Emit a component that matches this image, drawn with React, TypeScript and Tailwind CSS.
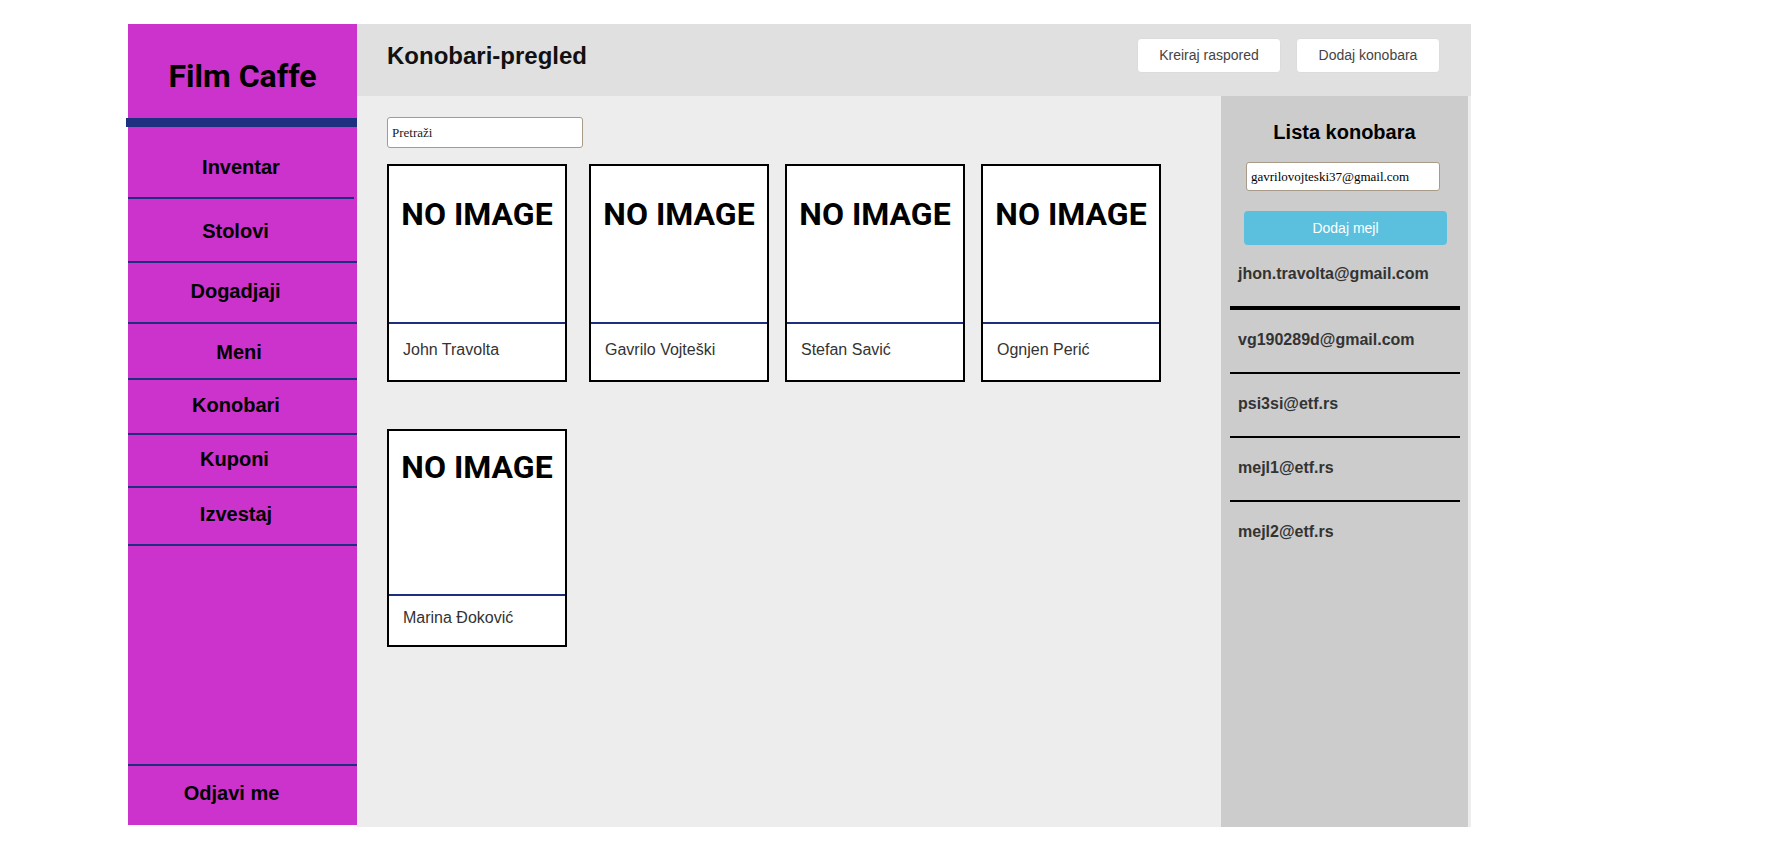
import React from 'react';

const navItems = [
  { label: 'Inventar', cls: 'h-[72px] pt-[28px] mr-[3px]' },
  { label: 'Stolovi', cls: 'h-[64px] pt-[20px] pr-[14px]' },
  { label: 'Dogadjaji', cls: 'h-[61px] pt-[16px] pr-[14px]' },
  { label: 'Meni', cls: 'h-[56px] pt-[16px] pr-[7px]' },
  { label: 'Konobari', cls: 'h-[55px] pt-[13px] pr-[13px]' },
  { label: 'Kuponi', cls: 'h-[53px] pt-[12px] pr-[16px]' },
  { label: 'Izvestaj', cls: 'h-[58px] pt-[14px] pr-[13px]' },
];

const waiters = ['John Travolta', 'Gavrilo Vojteški', 'Stefan Savić', 'Ognjen Perić', 'Marina Đoković'];

const mails = ['jhon.travolta@gmail.com', 'vg190289d@gmail.com', 'psi3si@etf.rs', 'mejl1@etf.rs', 'mejl2@etf.rs'];

const Sidebar: React.FC = () => (
  <aside className="w-[229px] h-[801px] shrink-0 bg-[#cc33cc] flex flex-col font-['Liberation_Sans',Arial,sans-serif] text-[20px] font-bold text-black">
    <div className="h-[94px] pt-[33px] text-center font-['Roboto',sans-serif] text-[32px] leading-[38px]">Film Caffe</div>
    <div className="h-[9px] w-[232px] -ml-[2px] bg-[#1e3180]" />
    {navItems.map((item) => (
      <div key={item.label} className={`${item.cls} border-b-2 border-[#1f2f7f] text-center leading-[24px]`}>
        {item.label}
      </div>
    ))}
    <div className="flex-1" />
    <div className="h-[61px] border-t-2 border-[#1f2f7f] pt-[15px] pr-[22px] text-center leading-[24px]">Odjavi me</div>
  </aside>
);

// second row card in the original is laid out a bit differently (taller photo area)
const WaiterCard: React.FC<{ name: string; first?: boolean; tall?: boolean }> = ({ name, first, tall }) => (
  <div className={`w-[180px] h-[218px] border-2 border-black bg-white flex flex-col ${first ? 'mr-[6px]' : ''}`}>
    <div
      className={`${tall ? 'h-[163px] pt-[20px]' : 'h-[156px] pt-[32px]'} text-center font-['Roboto',sans-serif] font-bold text-[32px] leading-[32px] text-black`}
    >
      NO IMAGE
    </div>
    <div className="h-[2px] bg-[#1f2f7f]" />
    <div className={`flex-1 pl-[14px] ${tall ? 'pt-[12px]' : 'pt-[16px]'} text-[16px] leading-[20px] text-[#333]`}>{name}</div>
  </div>
);

export default function App() {
  return (
    <div className="min-h-screen bg-white font-['Liberation_Sans',Arial,sans-serif]">
      <div className="ml-[128px] pt-[24px] flex w-[1343px] items-start">
        <Sidebar />

        <div className="flex-1 flex flex-col">
          {/* header */}
          <div className="h-[72px] bg-[#e0e0e0] flex justify-between">
            <h1 className="pl-[30px] pt-[18px] text-[24px] leading-[28px] font-bold text-[#111]">Konobari-pregled</h1>
            <div className="flex gap-[15px] pt-[14px] pr-[31px]">
              <button className="w-[144px] h-[35px] bg-white rounded-[4px] border border-[#dcdcdc] text-[14px] text-[#444]">
                Kreiraj raspored
              </button>
              <button className="w-[144px] h-[35px] bg-white rounded-[4px] border border-[#dcdcdc] text-[14px] text-[#444]">
                Dodaj konobara
              </button>
            </div>
          </div>

          <div className="h-[731px] flex bg-[#ededed]">
            {/* main list */}
            <div className="flex-1 px-[30px] pt-[21px]">
              <input
                placeholder="Pretraži"
                className="block w-[196px] h-[31px] bg-white border border-[#a89a88] rounded-[3px] px-[4px] font-['Liberation_Serif',serif] text-[13px] text-black placeholder:text-[#222] outline-none"
              />
              <div className="mt-[16px] flex flex-wrap gap-x-[16px] gap-y-[47px]">
                {waiters.map((w, i) => (
                  <WaiterCard key={w} name={w} first={i === 0} tall={i >= 4} />
                ))}
              </div>
            </div>

            {/* right panel */}
            <div className="w-[247px] mr-[3px] bg-[#cccccc]">
              <div className="pt-[24px] text-center text-[20px] leading-[24px] font-bold text-black">Lista konobara</div>
              <input
                defaultValue="gavrilovojteski37@gmail.com"
                className="block ml-[25px] mt-[18px] w-[194px] h-[29px] bg-white border border-[#a89a88] rounded-[3px] px-[4px] font-['Liberation_Serif',serif] text-[13px] text-black outline-none"
              />
              <button className="block ml-[23px] mt-[20px] w-[203px] h-[34px] rounded-[4px] bg-[#5bc0de] text-white text-[14px]">
                Dodaj mejl
              </button>
              <div className="ml-[9px] w-[230px]">
                {mails.map((m, i) => (
                  <div key={m}>
                    <div className={`${i === 0 ? 'mt-[19px]' : 'mt-[20px]'} pl-[8px] text-[16px] leading-[20px] font-bold text-[#333]`}>
                      {m}
                    </div>
                    {i < mails.length - 1 && (
                      <div className={`mt-[22px] bg-black ${i === 0 ? 'h-[4px]' : 'h-[2px]'}`} />
                    )}
                  </div>
                ))}
              </div>
            </div>
          </div>
        </div>
      </div>
    </div>
  );
}
